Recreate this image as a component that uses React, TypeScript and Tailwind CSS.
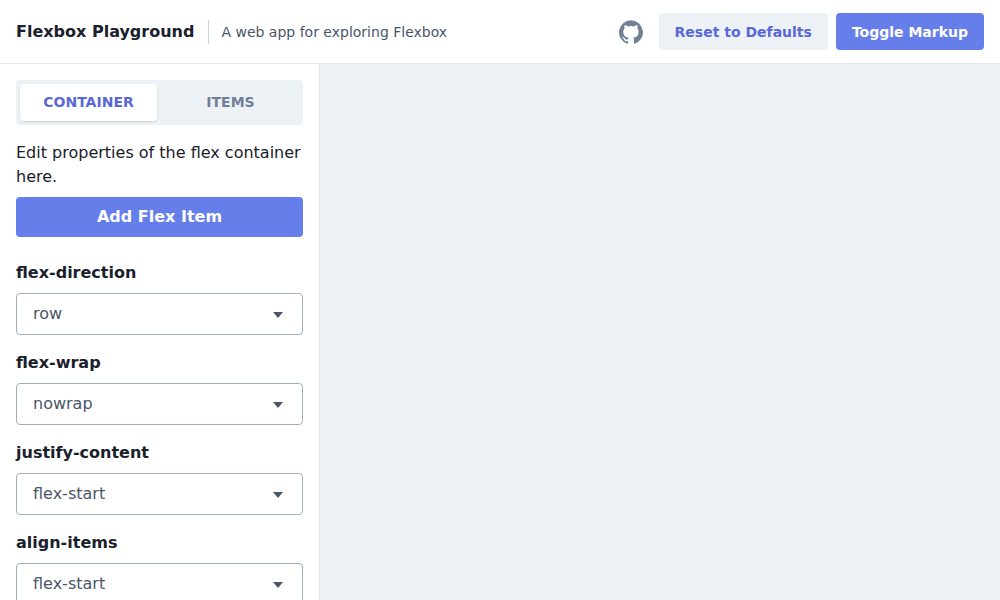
const selects = [
  { name: "flex-direction", value: "row" },
  { name: "flex-wrap", value: "nowrap" },
  { name: "justify-content", value: "flex-start" },
  { name: "align-items", value: "flex-start" },
];

const GithubIcon = () => (
  <svg viewBox="0 0 24 24" className="h-6 w-6 fill-[#718096]">
    <path d="M12 .3a12 12 0 0 0-3.8 23.38c.6.12.83-.26.83-.58l-.02-2.04c-3.34.73-4.04-1.6-4.04-1.6-.55-1.4-1.34-1.77-1.34-1.77-1.08-.74.09-.72.09-.72 1.2.08 1.84 1.23 1.84 1.23 1.07 1.84 2.8 1.3 3.49 1 .1-.78.42-1.3.76-1.6-2.67-.31-5.47-1.34-5.47-5.94 0-1.31.47-2.38 1.24-3.22-.14-.3-.54-1.52.1-3.18 0 0 1-.32 3.3 1.23a11.5 11.5 0 0 1 6 0c2.28-1.55 3.29-1.23 3.29-1.23.64 1.66.24 2.88.12 3.18a4.65 4.65 0 0 1 1.23 3.22c0 4.61-2.8 5.63-5.48 5.92.42.36.81 1.1.81 2.22l-.01 3.29c0 .32.2.7.82.58A12 12 0 0 0 12 .3" />
  </svg>
);

const App = () => {
  return (
    <div className="flex h-screen flex-col overflow-hidden bg-white font-['DejaVu_Sans',sans-serif] text-[#1a202c]">
      {/* header */}
      <header className="flex h-16 shrink-0 items-center justify-between border-b border-[#e2e8f0] px-4">
        <div className="flex items-center">
          <h1 className="text-base font-bold">Flexbox Playground</h1>
          <div className="mr-3 ml-[14px] h-6 w-px bg-[#cbd5e0]"></div>
          <p className="text-sm text-[#4a5568]">A web app for exploring Flexbox</p>
        </div>
        <div className="flex items-center">
          <a className="mr-4 flex">
            <GithubIcon />
          </a>
          <button className="mr-2 h-[37px] rounded bg-[#edf2f7] px-4 text-sm font-bold text-[#5a67d8]">
            Reset to Defaults
          </button>
          <button className="h-[37px] rounded bg-[#667eea] px-4 text-sm font-bold text-white">
            Toggle Markup
          </button>
        </div>
      </header>
      <div className="flex min-h-0 flex-1">
        {/* left pane */}
        <aside className="w-80 shrink-0 overflow-hidden border-r border-[#e2e8f0] p-4">
          <div className="flex h-[45px] gap-[5px] rounded bg-[#edf2f7] p-1">
            <button className="w-[137px] rounded bg-white pb-0.5 text-sm font-bold text-[#5a67d8] shadow">
              CONTAINER
            </button>
            <button className="w-[137px] pb-0.5 text-sm font-bold text-[#718096]">ITEMS</button>
          </div>
          <p className="mt-4 text-base leading-6">Edit properties of the flex container here.</p>
          <button className="mt-2 h-10 w-full rounded bg-[#667eea] font-bold text-white">
            Add Flex Item
          </button>
          <div className="mt-6">
            {selects.map(({ name, value }) => (
              <div key={name} className="mb-4">
                <p className="mb-2 text-base leading-6 font-bold">{name}</p>
                <div className="flex h-[42px] items-center justify-between rounded border border-[#a0aec0] pr-[19px] pl-4 text-[#4a5568]">
                  <span>{value}</span>
                  <span className="mt-px h-0 w-0 border-x-[5.5px] border-t-[6px] border-x-transparent border-t-[#4a5568]"></span>
                </div>
              </div>
            ))}
          </div>
        </aside>
        {/* right pane */}
        <main className="flex-1 bg-[#edf2f7]"></main>
      </div>
    </div>
  );
};

export default App;
